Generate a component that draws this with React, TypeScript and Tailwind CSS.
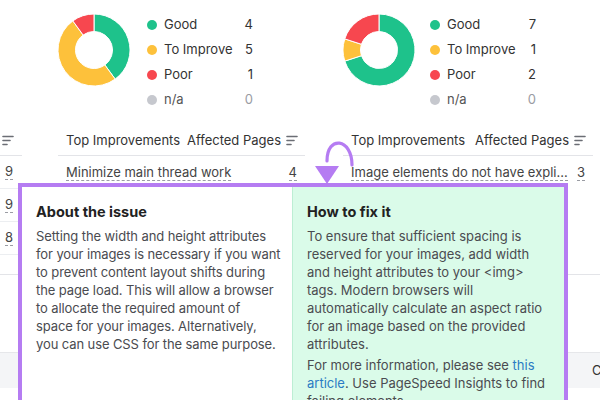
import React from 'react';

type Slice = { label: string; color: string; value: number };

const COLORS = {
  good: '#1ec28b',
  improve: '#fdc13b',
  poor: '#f7474f',
  na: '#c6c8ce',
};

function pt(cx: number, cy: number, rad: number, deg: number) {
  const a = (deg * Math.PI) / 180;
  return [cx + rad * Math.sin(a), cy - rad * Math.cos(a)];
}

function segment(cx: number, cy: number, R: number, r: number, a0: number, a1: number) {
  const large = a1 - a0 > 180 ? 1 : 0;
  const [x0, y0] = pt(cx, cy, R, a0);
  const [x1, y1] = pt(cx, cy, R, a1);
  const [x2, y2] = pt(cx, cy, r, a1);
  const [x3, y3] = pt(cx, cy, r, a0);
  return `M${x0} ${y0} A${R} ${R} 0 ${large} 1 ${x1} ${y1} L${x2} ${y2} A${r} ${r} 0 ${large} 0 ${x3} ${y3} Z`;
}

const Donut: React.FC<{ data: Slice[] }> = ({ data }) => {
  const total = data.reduce((s, d) => s + d.value, 0);
  let start = 0;
  return (
    <svg width="72" height="72" viewBox="0 0 72 72" className="shrink-0">
      {data
        .filter((d) => d.value > 0)
        .map((d) => {
          const end = start + (d.value / total) * 360;
          const p = segment(36, 36, 36, 18.5, start, end);
          start = end;
          return <path key={d.label} d={p} fill={d.color} stroke="#ffffff" strokeWidth="1" />;
        })}
    </svg>
  );
};

const SortIcon = () => (
  <svg width="12" height="11" viewBox="0 0 12 11" className="shrink-0">
    <g stroke="#6b6e75" strokeWidth="1.6" strokeLinecap="round">
      <line x1="1" y1="1.5" x2="11" y2="1.5" />
      <line x1="1" y1="5.5" x2="8" y2="5.5" />
      <line x1="1" y1="9.5" x2="5" y2="9.5" />
    </g>
  </svg>
);

const Legend: React.FC<{ data: Slice[] }> = ({ data }) => (
  <div className="flex flex-col w-[106px] -mt-[2px]">
    {data.map((d) => (
      <div key={d.label} className="flex items-center h-[25px] text-[13px]">
        <span className="w-[10px] h-[10px] rounded-full shrink-0" style={{ background: d.color }} />
        <span className={`ml-[7px] flex-1 ${d.label === 'n/a' ? 'text-[#555]' : 'text-[#333]'}`}>{d.label}</span>
        <span className={d.label === 'n/a' ? 'text-[#9a9ca3]' : 'text-[#333]'}>{d.value}</span>
      </div>
    ))}
  </div>
);

const Column: React.FC<{ data: Slice[]; issue: string; pages: number; gap: string; width: string }> = ({
  data,
  issue,
  pages,
  gap,
  width,
}) => (
  <div className={`flex flex-col ${width}`}>
    <div className={`flex h-[122px] pt-[14px] ${gap}`}>
      <Donut data={data} />
      <Legend data={data} />
    </div>
    <div className="flex items-center justify-between h-[34px] pt-[4px] border-b border-[#e3e4e8] pl-[8px] pr-[7px] text-[13px] text-[#333]">
      <span>Top Improvements</span>
      <span className="flex items-center gap-[5px]">
        Affected Pages
        <SortIcon />
      </span>
    </div>
    <div className="flex items-center justify-between h-[34px] pl-[8px] pr-[8px] text-[13px] text-[#444]">
      <span className="border-b border-dashed border-[#9a9ca3] leading-[15px] whitespace-nowrap">{issue}</span>
      <span className="border-b border-dashed border-[#9a9ca3] leading-[15px]">{pages}</span>
    </div>
  </div>
);

const left: Slice[] = [
  { label: 'Good', color: COLORS.good, value: 4 },
  { label: 'To Improve', color: COLORS.improve, value: 5 },
  { label: 'Poor', color: COLORS.poor, value: 1 },
  { label: 'n/a', color: COLORS.na, value: 0 },
];

const right: Slice[] = [
  { label: 'Good', color: COLORS.good, value: 7 },
  { label: 'To Improve', color: COLORS.improve, value: 1 },
  { label: 'Poor', color: COLORS.poor, value: 2 },
  { label: 'n/a', color: COLORS.na, value: 0 },
];

const aboutLines = [
  'Setting the width and height attributes',
  'for your images is necessary if you want',
  'to prevent content layout shifts during',
  'the page load. This will allow a browser',
  'to allocate the required amount of',
  'space for your images. Alternatively,',
  'you can use CSS for the same purpose.',
];

export default function App() {
  return (
    <div className="relative w-[600px] h-[400px] overflow-hidden bg-white font-['Inter',sans-serif]">
      {/* tables */}
      <div className="flex h-[274px]">
        <div className="flex flex-col w-[22px] shrink-0">
          <div className="h-[122px]" />
          <div className="flex items-center h-[34px] pt-[4px] border-b border-[#e3e4e8] pl-[2px]">
            <SortIcon />
          </div>
          {['9', '9', '8'].map((n, i) => (
            <div key={i} className="flex items-center justify-end h-[33px] border-b border-[#eceef1] pr-[9px] text-[13px] text-[#444]">
              <span className="border-b border-dashed border-[#9a9ca3] leading-[15px]">{n}</span>
            </div>
          ))}
        </div>
        <div className="ml-[36px]">
          <Column data={left} issue="Minimize main thread work" pages={4} gap="gap-[17px]" width="w-[247px]" />
        </div>
        <div className="ml-[38px]">
          <Column data={right} issue="Image elements do not have expli..." pages={3} gap="gap-[15px]" width="w-[250px]" />
        </div>
      </div>
      <div className="border-t border-[#e3e4e8] h-[78px]" />
      <div className="flex items-center h-[36px] bg-[#f4f5f7] border-t border-[#e6e7ea] pl-[592px] text-[13px] text-[#333] whitespace-nowrap">
        Close
      </div>

      {/* arrow callout */}
      <svg className="absolute left-[308px] top-[133px]" width="50" height="54" viewBox="0 0 50 54">
        <path d="M44 32 C44 5, 19 2, 19 28" fill="none" stroke="#b57cf2" strokeWidth="3.2" strokeLinecap="round" />
        <path d="M7 33 L31 33 L19 51 Z" fill="#b57cf2" />
      </svg>

      {/* issue popup */}
      <div className="absolute left-[18px] top-[183px] w-[550px] h-[260px] border-4 border-[#b57cf2] bg-white grid grid-cols-[270px_272px] text-[13px] leading-[18px]">
        <div className="pl-[14px] pt-[15px]">
          <h3 className="text-[14.5px] leading-[20px] font-bold text-[#222]">About the issue</h3>
          <p className="mt-[5px] text-[#4a4b50] whitespace-nowrap tracking-[-0.1px]">
            {aboutLines.map((l, i) => (
              <React.Fragment key={i}>
                {l}
                {i < aboutLines.length - 1 && <br />}
              </React.Fragment>
            ))}
          </p>
        </div>
        <div className="bg-[#dafbe9] border-l border-[#bdeed4] pl-[14px] pr-[10px] pt-[15px]">
          <h3 className="text-[14.5px] leading-[20px] font-bold text-[#222]">How to fix it</h3>
          <p className="mt-[5px] text-[#4a4b50]">
            To ensure that sufficient spacing is reserved for your images, add width and height attributes to your
            &lt;img&gt; tags. Modern browsers will automatically calculate an aspect ratio for an image based on the
            provided attributes.
          </p>
          <p className="mt-[3px] text-[#4a4b50]">
            For more information, please see <span className="text-[#2b7bc4]">this article</span>. Use PageSpeed
            Insights to find failing elements.
          </p>
        </div>
      </div>
    </div>
  );
}
